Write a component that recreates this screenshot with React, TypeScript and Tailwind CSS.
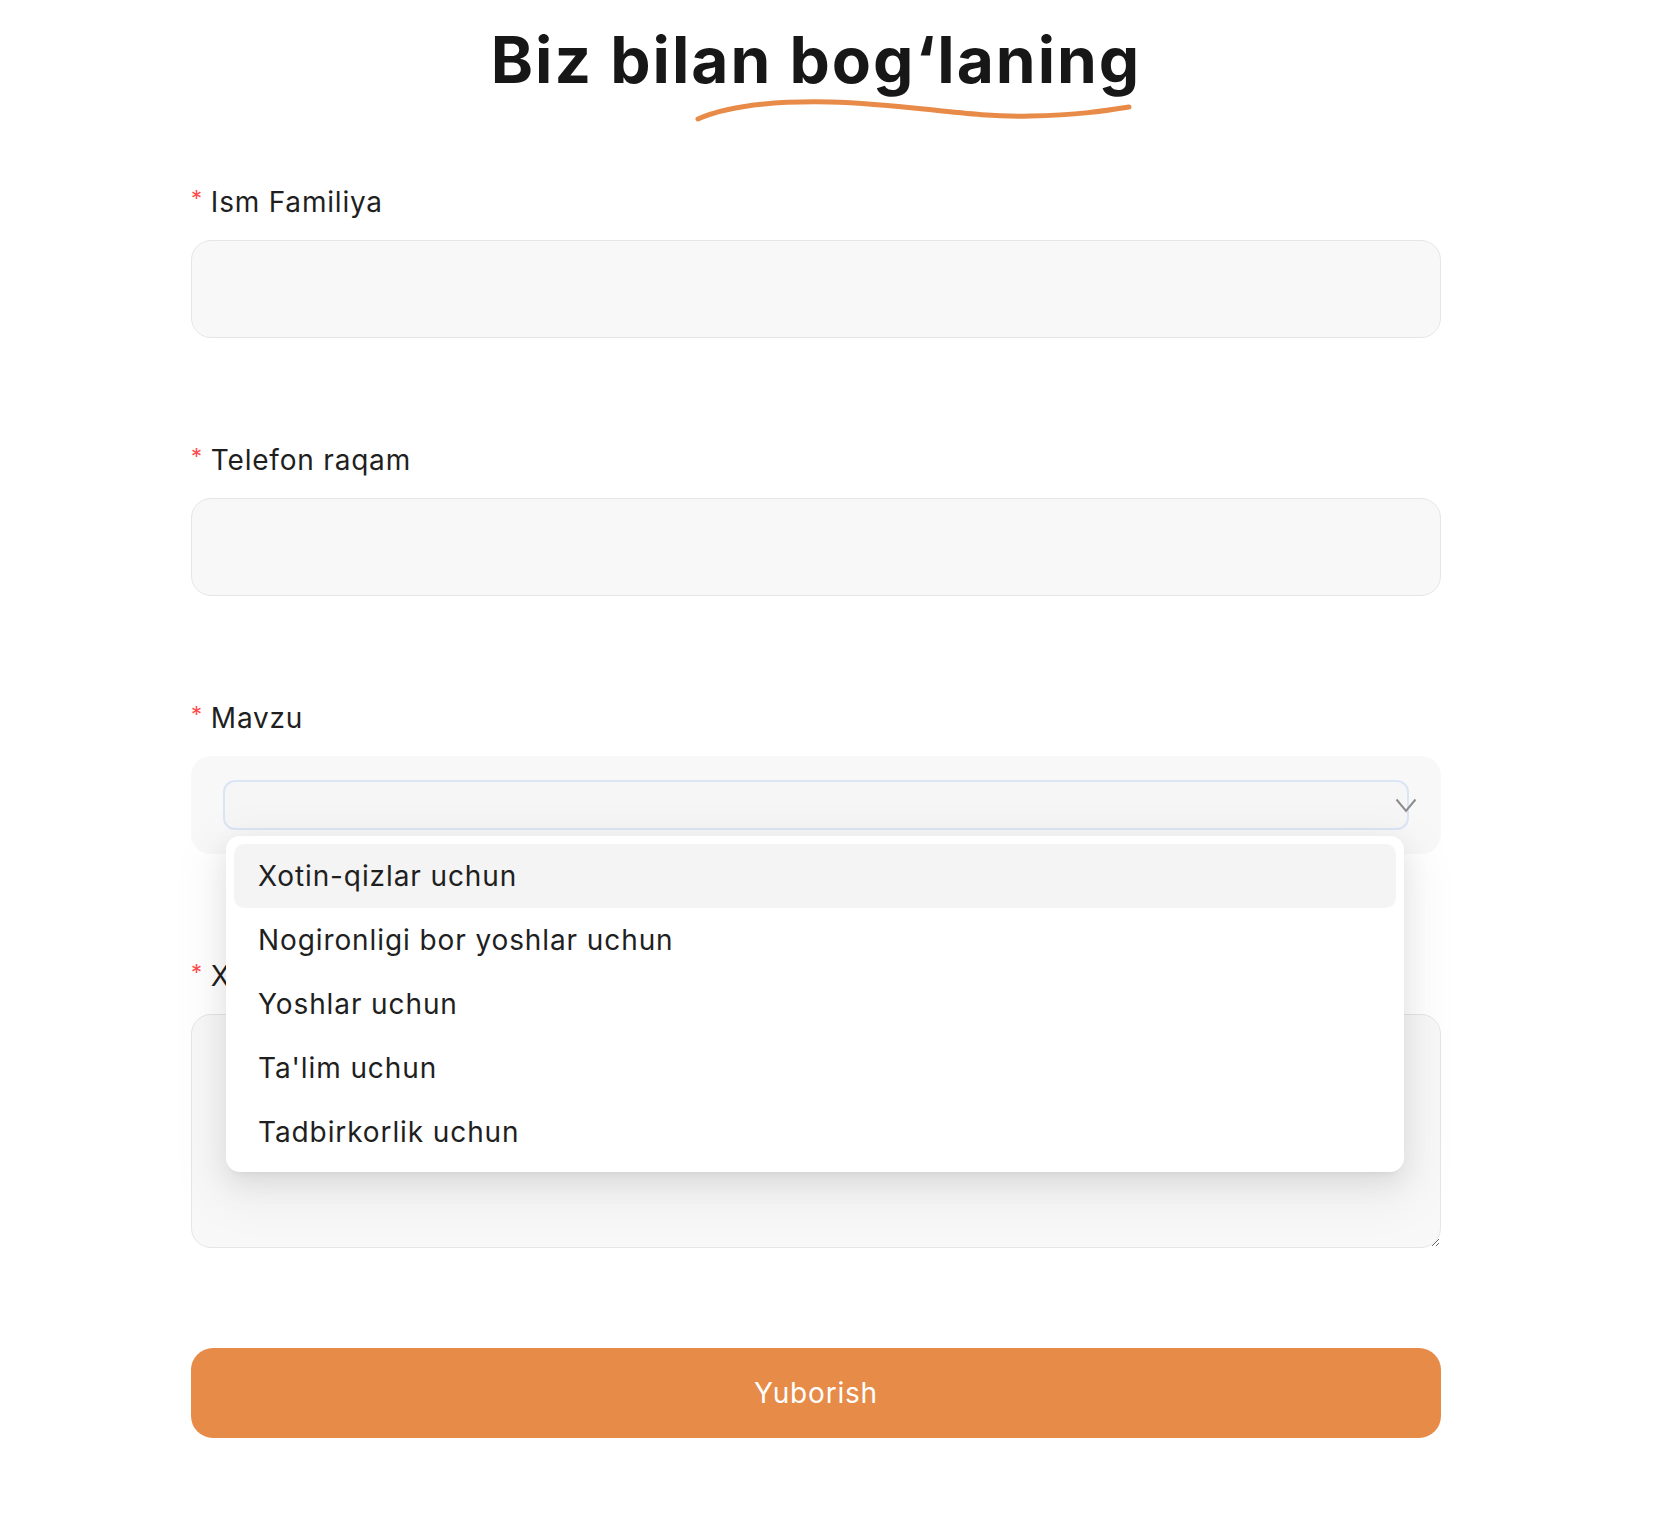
import { useState } from 'react';

const topics = [
  'Xotin-qizlar uchun',
  'Nogironligi bor yoshlar uchun',
  'Yoshlar uchun',
  "Ta'lim uchun",
  'Tadbirkorlik uchun',
];

const Label = ({ text }: { text: string }) => (
  <label className="flex h-[40px] items-center mb-[18px] text-[28px] leading-[40px] tracking-[0.8px] text-[#1f1f1f]">
    <span className="mr-[8px] text-[22px] leading-none text-[#ff4d4f] -translate-y-[4px]">*</span>
    {text}
  </label>
);

export default function App() {
  const [active] = useState(0);

  return (
    <div className="w-[1632px] bg-white font-[Inter,'Noto_Sans',sans-serif]">
      <div className="mx-auto w-[1250px]">
        {/* Header */}
        <div className="relative pt-[28px] mb-[90px]">
          <h1 className="text-center text-[64px] leading-[64px] font-bold tracking-[2px] text-[#171717]">
            Biz bilan bog‘laning
          </h1>
          <svg
            className="absolute left-[499px] top-[95px]"
            width="452"
            height="32"
            viewBox="0 0 452 32"
            fill="none"
          >
            <path
              d="M8 24 C40 10 90 6 140 7 C220 9 280 23 340 21 C388 20 414 16 439 12"
              stroke="#e88b48"
              strokeWidth="5"
              strokeLinecap="round"
            />
          </svg>
        </div>

        {/* Form */}
        <form onSubmit={(e) => e.preventDefault()}>
          <div className="mb-[102px]">
            <Label text="Ism Familiya" />
            <input className="block h-[98px] w-full rounded-[20px] border border-[#e6e6e6] bg-[#f8f8f8] px-[24px] text-[28px] outline-none" />
          </div>

          <div className="mb-[102px]">
            <Label text="Telefon raqam" />
            <input className="block h-[98px] w-full rounded-[20px] border border-[#e6e6e6] bg-[#f8f8f8] px-[24px] text-[28px] outline-none" />
          </div>

          <div className="mb-[102px]">
            <Label text="Mavzu" />
            <div className="relative h-[98px] rounded-[20px] bg-[#f8f8f8] px-[32px] pt-[24px]">
              <div className="h-[50px] rounded-[12px] border-2 border-[#dae5f5] bg-[#f6f6f6]" />
              <svg className="absolute left-[1204px] top-[42px]" width="22" height="15" viewBox="0 0 22 15" fill="none">
                <polyline points="1.5,1.5 11,13 20.5,1.5" stroke="#8c8c8c" strokeWidth="2" />
              </svg>

              {/* Dropdown */}
              <div className="absolute left-[35px] top-[80px] z-10 w-[1178px] rounded-[14px] bg-white p-[8px] shadow-[0_10px_28px_0_rgba(0,0,0,0.08),0_5px_10px_-7px_rgba(0,0,0,0.12),0_16px_49px_14px_rgba(0,0,0,0.05)]">
                {topics.map((t, i) => (
                  <div
                    key={t}
                    className={`flex h-[64px] items-center rounded-[10px] px-[24px] text-[28px] tracking-[0.9px] text-[#1f1f1f] ${
                      i === active ? 'bg-[#f4f4f4]' : ''
                    }`}
                  >
                    {t}
                  </div>
                ))}
              </div>
            </div>
          </div>

          <div className="mb-[100px]">
            <Label text="Xabar" />
            <textarea className="block h-[234px] w-full rounded-[20px] border border-[#e6e6e6] bg-[#f8f8f8] px-[24px] py-[16px] text-[28px] outline-none" />
          </div>

          <button
            type="submit"
            className="block h-[90px] w-full rounded-[22px] bg-[#e68b48] text-[28px] tracking-[0.8px] text-white"
          >
            Yuborish
          </button>
        </form>
        <div className="h-[80px]" />
      </div>
    </div>
  );
}
